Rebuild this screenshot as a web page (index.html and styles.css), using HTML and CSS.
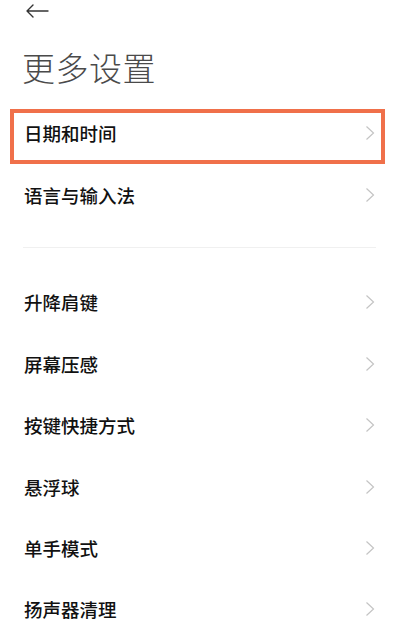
FILE: index.html
```html
<!DOCTYPE html>
<html lang="zh-CN">
<head>
<meta charset="utf-8">
<title>更多设置</title>
<link rel="stylesheet" href="styles.css">
</head>
<body>
<div class="page">
  <div class="topbar">
    <svg class="back" width="24" height="14" viewBox="0 0 24 14"><path d="M23 7H2M8 1L2 7l6 6" fill="none" stroke="#333" stroke-width="1.4" stroke-linecap="round" stroke-linejoin="round"/></svg>
  </div>
  <h1 class="title">更多设置</h1>
  <div class="section">
    <div class="row highlight"><span class="label">日期和时间</span><svg class="chev" width="10" height="16" viewBox="0 0 10 16"><path d="M1.5 1.5L8.5 8l-7 6.5" fill="none" stroke="#c4c4c4" stroke-width="1.2"/></svg></div>
    <div class="row"><span class="label">语言与输入法</span><svg class="chev" width="10" height="16" viewBox="0 0 10 16"><path d="M1.5 1.5L8.5 8l-7 6.5" fill="none" stroke="#c4c4c4" stroke-width="1.2"/></svg></div>
  </div>
  <div class="divider"></div>
  <div class="section">
    <div class="row"><span class="label">升降肩键</span><svg class="chev" width="10" height="16" viewBox="0 0 10 16"><path d="M1.5 1.5L8.5 8l-7 6.5" fill="none" stroke="#c4c4c4" stroke-width="1.2"/></svg></div>
    <div class="row"><span class="label">屏幕压感</span><svg class="chev" width="10" height="16" viewBox="0 0 10 16"><path d="M1.5 1.5L8.5 8l-7 6.5" fill="none" stroke="#c4c4c4" stroke-width="1.2"/></svg></div>
    <div class="row"><span class="label">按键快捷方式</span><svg class="chev" width="10" height="16" viewBox="0 0 10 16"><path d="M1.5 1.5L8.5 8l-7 6.5" fill="none" stroke="#c4c4c4" stroke-width="1.2"/></svg></div>
    <div class="row"><span class="label">悬浮球</span><svg class="chev" width="10" height="16" viewBox="0 0 10 16"><path d="M1.5 1.5L8.5 8l-7 6.5" fill="none" stroke="#c4c4c4" stroke-width="1.2"/></svg></div>
    <div class="row"><span class="label">单手模式</span><svg class="chev" width="10" height="16" viewBox="0 0 10 16"><path d="M1.5 1.5L8.5 8l-7 6.5" fill="none" stroke="#c4c4c4" stroke-width="1.2"/></svg></div>
    <div class="row"><span class="label">扬声器清理</span><svg class="chev" width="10" height="16" viewBox="0 0 10 16"><path d="M1.5 1.5L8.5 8l-7 6.5" fill="none" stroke="#c4c4c4" stroke-width="1.2"/></svg></div>
  </div>
</div>
</body>
</html>
```
FILE: styles.css
```css
html, body {
  margin: 0;
  padding: 0;
  background: #ffffff;
}
body {
  font-family: "Noto Sans CJK SC", "Noto Sans", sans-serif;
  color: #111;
  overflow: hidden;
}
.page {
  width: 394px;
  display: flex;
  flex-direction: column;
}
.topbar {
  height: 22px;
  padding-left: 25px;
  display: flex;
  align-items: center;
}
.back {
  display: block;
}
.title {
  margin: 23px 0 0 22px;
  font-size: 33px;
  line-height: 44px;
  height: 44px;
  font-weight: 300;
  color: #4a4a4a;
  letter-spacing: 0.5px;
}
.section {
  display: flex;
  flex-direction: column;
  margin-top: 13.5px;
}
.row {
  height: 61.4px;
  display: flex;
  align-items: center;
  justify-content: space-between;
  padding: 0 19px 0 24px;
  position: relative;
}
.label {
  font-size: 18.5px;
  font-weight: 500;
  color: #111111;
}
.chev {
  display: block;
}
.highlight::after {
  content: "";
  position: absolute;
  left: 10px;
  right: 9px;
  top: 6.5px;
  bottom: -0.5px;
  border: 4.5px solid #f0704a;
  pointer-events: none;
}
.divider {
  height: 1px;
  background: #f0f0f0;
  margin: 21.5px 18px 0 23px;
}
.divider + .section {
  margin-top: 24px;
}
```
